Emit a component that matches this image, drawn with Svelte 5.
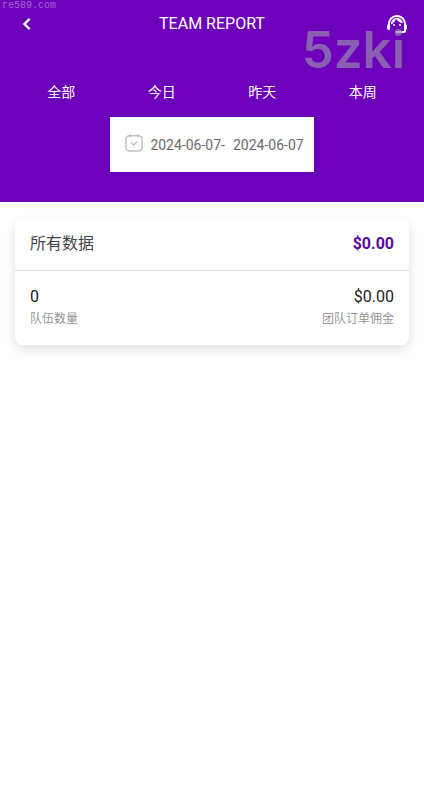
<script>
  const ranges = ['全部', '今日', '昨天', '本周'];
  let selected = $state('全部');
  let from = $state('2024-06-07');
  let to = $state('2024-06-07');
</script>

<div class="page">
  <header class="top">
    <nav class="bar">
      <button class="icon" aria-label="返回">
        <svg width="24" height="24" viewBox="0 0 24 24" fill="none" stroke="currentColor" stroke-width="2.4">
          <path d="M14.6 6.9 9.5 12l5.1 5.1" />
        </svg>
      </button>
      <h1>TEAM REPORT</h1>
      <button class="icon" aria-label="客服">
        <svg width="24" height="24" viewBox="0 0 24 24" fill="currentColor">
          <path d="M21 12.22C21 6.73 16.74 3 12 3c-4.69 0-9 3.65-9 9.28-.6.34-1 .98-1 1.72v2c0 1.1.9 2 2 2h1v-6.1c0-3.87 3.13-7 7-7s7 3.13 7 7V19h-8v2h8c1.1 0 2-.9 2-2v-1.22c.59-.31 1-.92 1-1.64v-2.3c0-.7-.41-1.31-1-1.62z" />
          <circle cx="9" cy="13" r="1" />
          <circle cx="15" cy="13" r="1" />
          <path d="M18 11.03C17.52 8.18 15.04 6 12.05 6c-3.03 0-6.29 2.51-6.03 6.45 2.47-1.01 4.33-3.21 4.86-5.89 1.31 2.63 4 4.44 7.12 4.47z" />
        </svg>
      </button>
    </nav>

    <div class="ranges">
      {#each ranges as range}
        <button aria-pressed={selected === range} onclick={() => (selected = range)}>{range}</button>
      {/each}
    </div>

    <button class="dates">
      <svg width="18" height="18" viewBox="0 0 18 18" fill="none" stroke="#c0c0c4" stroke-width="1.5" stroke-linecap="round">
        <rect x="1" y="1.8" width="16" height="15.2" rx="3.5" />
        <path d="M5 .8v2M13 .8v2M6.4 8.8l2.2 2.2 3.4-3.2" />
      </svg>
      <span class="from">{from}</span>
      <span class="dash">-</span>
      <span>{to}</span>
    </button>
  </header>

  <main>
    <section class="card">
      <div class="row head">
        <h2>所有数据</h2>
        <strong>$0.00</strong>
      </div>
      <dl class="row stats">
        <div>
          <dt>队伍数量</dt>
          <dd>0</dd>
        </div>
        <div class="right">
          <dt>团队订单佣金</dt>
          <dd>$0.00</dd>
        </div>
      </dl>
    </section>
  </main>

  <span class="mark site">re589.com</span>
  <span class="mark brand">5zki</span>
</div>

<style>
  :global(body) {
    background: #fff;
  }
  .page {
    position: relative;
    font-family: Roboto, 'Noto Sans CJK SC', sans-serif;
    color: #222;
  }
  button {
    margin: 0;
    padding: 0;
    border: 0;
    background: none;
    font: inherit;
    color: inherit;
    cursor: pointer;
  }
  svg {
    display: block;
  }
  .top {
    display: flex;
    flex-direction: column;
    padding-bottom: 30px;
    background: #6c00bb;
    color: #fff;
  }
  .bar {
    display: flex;
    align-items: center;
    justify-content: space-between;
    height: 48px;
    padding: 0 15px;
  }
  h1 {
    margin: 0;
    font-size: 16px;
    line-height: 26px;
    font-weight: 400;
  }
  .ranges {
    display: grid;
    grid-template-columns: repeat(4, 1fr);
    padding: 32px 11px 13px;
    font-size: 14px;
    line-height: 24px;
  }
  .dates {
    display: flex;
    align-items: center;
    align-self: center;
    height: 55px;
    padding: 0 10px 0 15px;
    background: #fff;
    color: #6b6b6b;
    font-size: 14px;
    line-height: 20px;
  }
  .dates svg {
    margin-bottom: 4px;
  }
  .from {
    margin-left: 7px;
  }
  .dash {
    margin-right: 8px;
  }
  main {
    padding: 16px 15px;
  }
  .card {
    border-radius: 8px;
    background: #fff;
    box-shadow: 0 5px 12px rgba(0, 0, 0, 0.11);
  }
  .row {
    display: flex;
    align-items: center;
    justify-content: space-between;
    margin: 0;
    padding: 0 15px;
  }
  .head {
    height: 52px;
    border-bottom: 1px solid #e2e2e2;
  }
  h2 {
    margin: 0;
    font-size: 16px;
    line-height: 24px;
    font-weight: 400;
    color: #444;
  }
  strong {
    font-size: 16px;
    line-height: 24px;
    font-weight: 700;
    color: #5c0a9e;
  }
  .stats {
    padding: 14px 15px 16px;
  }
  .stats div {
    display: flex;
    flex-direction: column-reverse;
  }
  .stats .right {
    text-align: right;
  }
  dt {
    font-size: 12px;
    line-height: 20px;
    color: #969696;
  }
  dd {
    margin: 0;
    font-size: 16px;
    line-height: 24px;
  }
  .mark {
    position: absolute;
    pointer-events: none;
  }
  .site {
    top: 0;
    left: 2px;
    font: 10px/12px 'Liberation Mono', monospace;
    color: #a866d6;
  }
  .brand {
    top: 20px;
    right: 19px;
    font: 600 51px/60px Inter, sans-serif;
    color: rgba(152, 140, 172, 0.68);
  }
</style>
